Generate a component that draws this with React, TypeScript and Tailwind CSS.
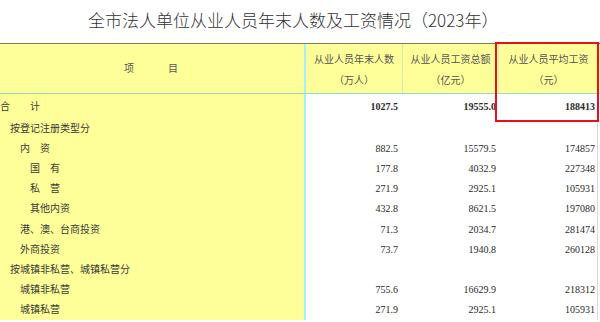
import React from "react";

interface Row {
  label: string;
  indent: number;
  values?: [string, string, string];
  bold?: boolean;
  tall?: boolean;
}

const rows: Row[] = [
  { label: "合　　计", indent: 0, values: ["1027.5", "19555.0", "188413"], bold: true, tall: true },
  { label: "按登记注册类型分", indent: 1 },
  { label: "内　资", indent: 2, values: ["882.5", "15579.5", "174857"] },
  { label: "国　有", indent: 3, values: ["177.8", "4032.9", "227348"] },
  { label: "私　营", indent: 3, values: ["271.9", "2925.1", "105931"] },
  { label: "其他内资", indent: 3, values: ["432.8", "8621.5", "197080"] },
  { label: "港、澳、台商投资", indent: 2, values: ["71.3", "2034.7", "281474"] },
  { label: "外商投资", indent: 2, values: ["73.7", "1940.8", "260128"] },
  { label: "按城镇非私营、城镇私营分", indent: 1 },
  { label: "城镇非私营", indent: 2, values: ["755.6", "16629.9", "218312"] },
  { label: "城镇私营", indent: 2, values: ["271.9", "2925.1", "105931"] },
];

const indentClass = ["pl-0", "pl-[10px]", "pl-[20px]", "pl-[30px]"];

const serif = "font-['Liberation_Serif','Noto_Sans_CJK_SC',serif]";

const HeaderCell: React.FC<{ top: string; bottom: string; className: string }> = ({
  top,
  bottom,
  className,
}) => (
  <div className={`flex flex-col items-center pt-[5px] leading-[21px] ${className}`}>
    <span>{top}</span>
    <span>{bottom}</span>
  </div>
);

export default function App() {
  return (
    <div
      className={`relative w-[600px] h-[322px] overflow-hidden bg-white text-[#2a2a2a] ${serif}`}
    >
      <h1 className="h-[43px] pl-[88px] text-[17px] leading-[40px] font-light text-[#333] font-['Noto_Sans_CJK_SC',sans-serif]">
        全市法人单位从业人员年末人数及工资情况（2023年）
      </h1>

      {/* header */}
      <div className="flex h-[51px] border-t border-b border-t-[#7f7b5a] border-b-[#92dcc8] bg-[#ffff99] text-[10px] text-[#555]">
        <div className="flex w-[306px] items-center justify-center gap-[34px] border-r-2 border-[#a6eefa] pr-[2px]">
          <span>项</span>
          <span>目</span>
        </div>
        <HeaderCell
          top="从业人员年末人数"
          bottom="（万人）"
          className="w-[97px] border-r border-[#c8efb8]"
        />
        <HeaderCell
          top="从业人员工资总额"
          bottom="（亿元）"
          className="w-[96px] border-r border-[#c8efb8]"
        />
        <HeaderCell top="从业人员平均工资" bottom="（元）" className="w-[99px]" />
      </div>

      {/* body */}
      <div className="flex flex-col text-[10px]">
        {rows.map((row, i) => (
          <div key={i} className={`flex ${row.tall ? "h-[24px]" : "h-[20.2px]"}`}>
            <div
              className={`flex w-[306px] items-center border-r-2 border-[#a6eefa] bg-[#ffff99] whitespace-nowrap text-[#3a3a3a] ${indentClass[row.indent]}`}
            >
              {row.label}
            </div>
            <div
              className={`flex w-[97px] items-center justify-end pr-[5px] ${row.bold ? "font-bold" : ""}`}
            >
              {row.values?.[0]}
            </div>
            <div
              className={`flex w-[96px] items-center justify-end pr-[3px] ${row.bold ? "font-bold" : ""}`}
            >
              {row.values?.[1]}
            </div>
            <div
              className={`flex w-[99px] items-center justify-end pr-[2px] border-r border-[#dadada] ${row.bold ? "font-bold" : ""}`}
            >
              {row.values?.[2]}
            </div>
          </div>
        ))}
      </div>

      {/* highlight annotation */}
      <div className="pointer-events-none absolute left-[495px] top-[42px] h-[80px] w-[104px] border-2 border-[#e8101c]" />
    </div>
  );
}
